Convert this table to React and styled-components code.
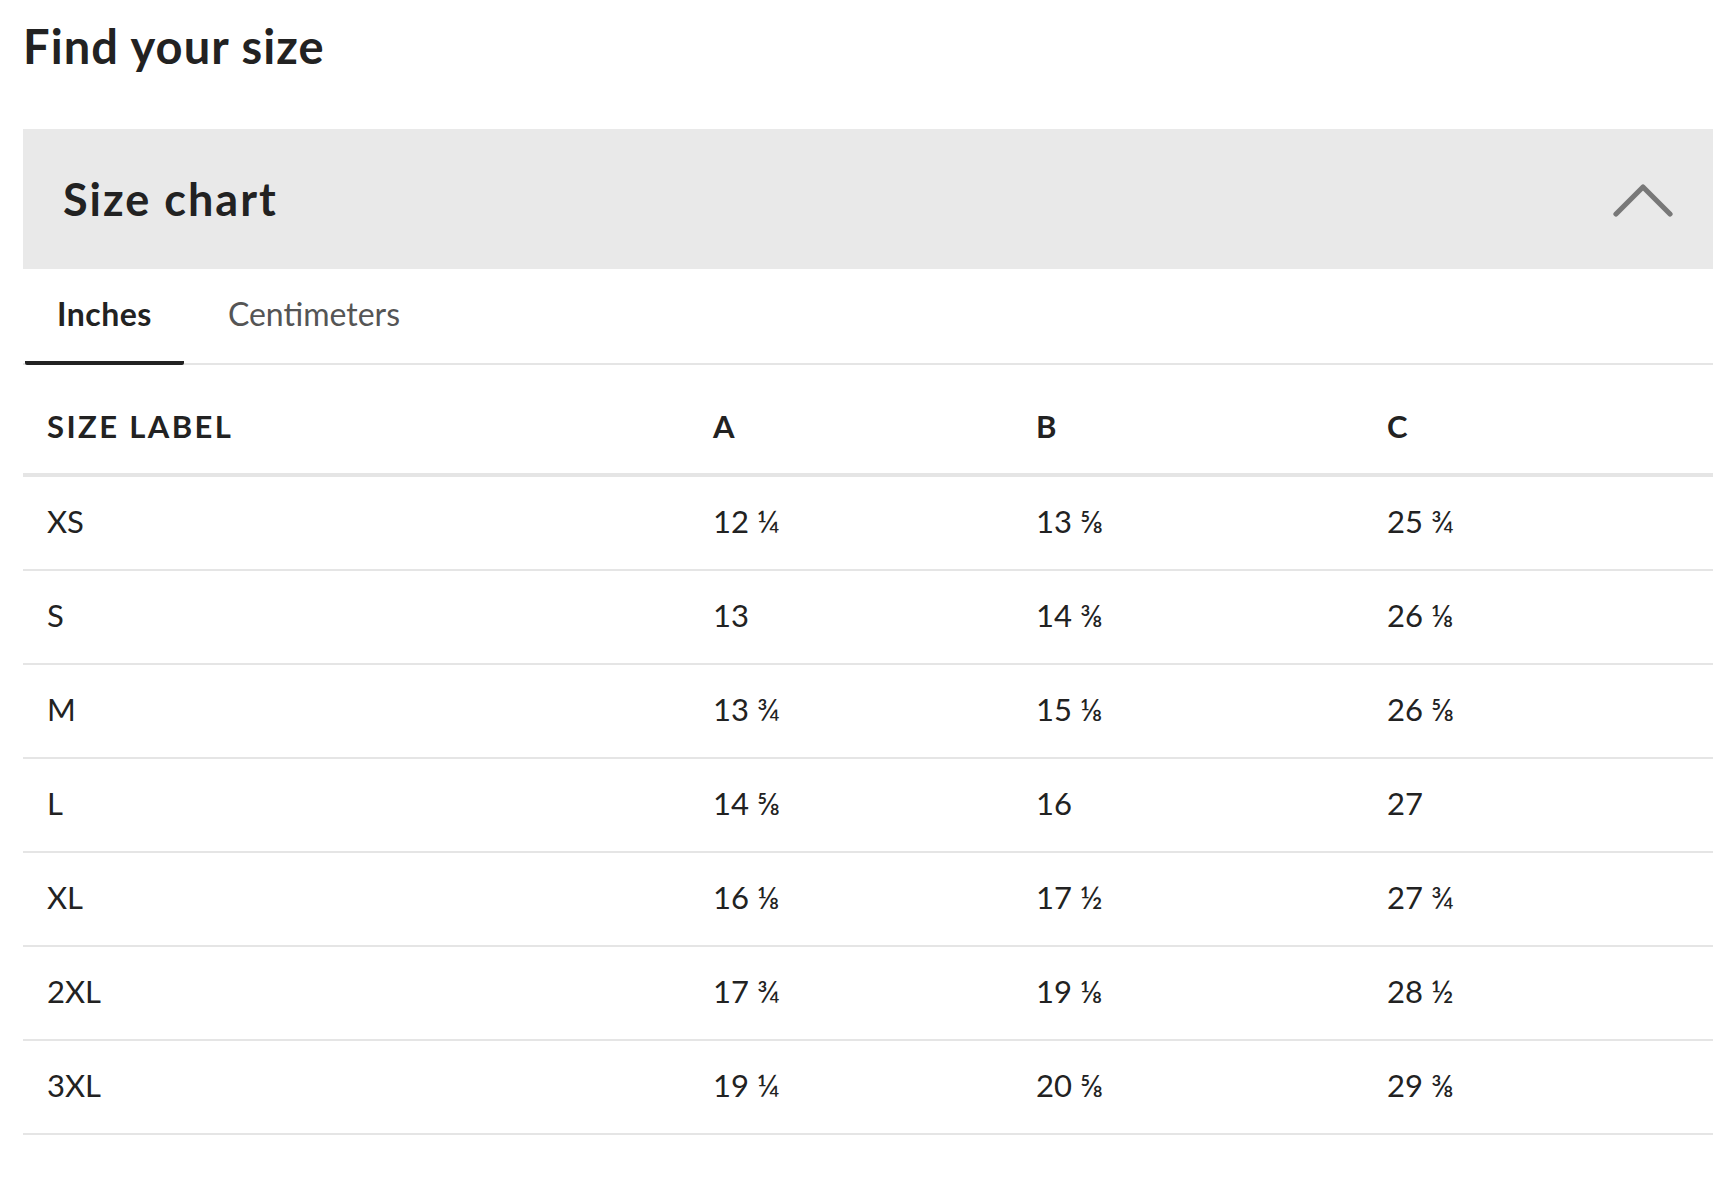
import React, { useState } from 'react';
import styled, { createGlobalStyle } from 'styled-components';

const GlobalStyle = createGlobalStyle`
  body {
    margin: 0;
    background: #fff;
    color: #222;
    font-family: 'Lato', 'DejaVu Sans', sans-serif;
  }
`;

const Page = styled.div`
  padding: 0 23px 47px;
`;

const Title = styled.h1`
  margin: 18px 0 0;
  font-size: 47px;
  line-height: 56px;
  font-weight: 700;
  letter-spacing: 1.1px;
  color: #222;
`;

const AccordionHeader = styled.div`
  margin-top: 55px;
  height: 140px;
  background-color: #e9e9e9;
  display: flex;
  align-items: center;
  justify-content: space-between;
  padding: 0 40px;
`;

const AccordionTitle = styled.h2`
  margin: 0;
  font-size: 45px;
  font-weight: 700;
  letter-spacing: 2px;
  color: #222;
`;

const Tabs = styled.div`
  display: flex;
  gap: 12px;
  height: 94px;
  border-bottom: 2px solid #e5e5e5;
  padding-left: 2px;
`;

const Tab = styled.button`
  background: none;
  border: none;
  border-bottom: 4px solid ${(p) => (p.active ? '#222' : 'transparent')};
  border-radius: 2px;
  margin-bottom: -2px;
  padding: 25px 32px 0;
  align-self: stretch;
  display: flex;
  align-items: flex-start;
  font-family: inherit;
  font-size: 32px;
  line-height: 40px;
  font-weight: ${(p) => (p.active ? 700 : 400)};
  letter-spacing: ${(p) => (p.active ? '0.5px' : '0')};
  color: ${(p) => (p.active ? '#222' : '#555')};
  cursor: pointer;
`;

const Table = styled.div`
  margin-top: 14px;
`;

const Row = styled.div`
  display: grid;
  grid-template-columns: 666px 323px 351px 1fr;
  align-items: center;
  height: ${(p) => (p.head ? '94px' : '92px')};
  border-bottom: ${(p) => (p.head ? '4px' : '2px')} solid #e5e5e5;
`;

const Cell = styled.div`
  padding-left: 24px;
  padding-bottom: ${(p) => (p.head ? '0' : '4px')};
  font-size: 31px;
  font-weight: ${(p) => (p.head ? 700 : 400)};
  letter-spacing: ${(p) => (p.head ? '2.4px' : '0')};
  color: #222;
  white-space: nowrap;
`;

const Chevron = () => (
  <svg width="60" height="36" viewBox="0 0 60 36" fill="none">
    <polyline
      points="3,33 30,6 57,33"
      stroke="#787878"
      strokeWidth="5.2"
      strokeLinecap="round"
      strokeLinejoin="round"
    />
  </svg>
);

const rows = [
  ['XS', '12 ¼', '13 ⅝', '25 ¾'],
  ['S', '13', '14 ⅜', '26 ⅛'],
  ['M', '13 ¾', '15 ⅛', '26 ⅝'],
  ['L', '14 ⅝', '16', '27'],
  ['XL', '16 ⅛', '17 ½', '27 ¾'],
  ['2XL', '17 ¾', '19 ⅛', '28 ½'],
  ['3XL', '19 ¼', '20 ⅝', '29 ⅜'],
];

const App = () => {
  const [unit, setUnit] = useState('in');

  return (
    <Page>
      <GlobalStyle />
      <Title>Find your size</Title>
      <AccordionHeader>
        <AccordionTitle>Size chart</AccordionTitle>
        <Chevron />
      </AccordionHeader>
      <Tabs>
        <Tab active={unit === 'in'} onClick={() => setUnit('in')}>Inches</Tab>
        <Tab active={unit === 'cm'} onClick={() => setUnit('cm')}>Centimeters</Tab>
      </Tabs>
      <Table>
        <Row head>
          <Cell head>SIZE LABEL</Cell>
          <Cell head>A</Cell>
          <Cell head>B</Cell>
          <Cell head>C</Cell>
        </Row>
        {rows.map((r) => (
          <Row key={r[0]}>
            {r.map((v, i) => (
              <Cell key={i}>{v}</Cell>
            ))}
          </Row>
        ))}
      </Table>
    </Page>
  );
};

export default App;
